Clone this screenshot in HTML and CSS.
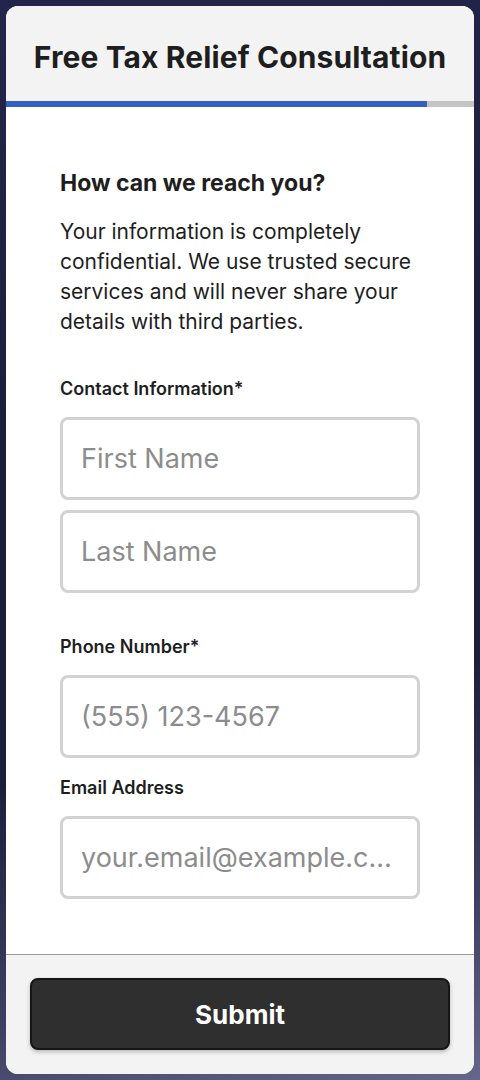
FILE: index.html
```html
<!DOCTYPE html>
<html lang="en">
<head>
  <meta charset="UTF-8" />
  <title>Free Tax Relief Consultation</title>
  <link rel="stylesheet" href="styles.css">
</head>
<body>

  <div class="card">
    <div class="card-header">
      <h1>Free Tax Relief Consultation</h1>
    </div>
    <div class="progress">
      <div class="progress-fill" style="width: 90%;"></div>
    </div>

    <form class="card-body">
      <h2>How can we reach you?</h2>
      <p class="intro">Your information is completely confidential. We use trusted secure services and will never share your details with third parties.</p>

      <div class="field">
        <label>Contact Information*</label>
        <input type="text" placeholder="First Name" />
        <input type="text" placeholder="Last Name" />
      </div>

      <div class="field field-tight">
        <label>Phone Number*</label>
        <input type="tel" placeholder="(555) 123-4567" />
      </div>

      <div class="field field-last">
        <label>Email Address</label>
        <input type="email" placeholder="your.email@example.com" />
      </div>
    </form>

    <div class="card-footer">
      <button class="submit-btn">Submit</button>
    </div>
  </div>

</body>
</html>
```

FILE: styles.css
```css
:root {
  --panel: #f3f3f3;
  --text: #1e1e1e;
  --accent: #335fc0;
  --border: #d2d2d2;
}

* {
  box-sizing: border-box;
}

body {
  margin: 0;
  padding: 6px;
  min-height: 1080px;
  font-family: Inter, 'Noto Sans', sans-serif;
  color: var(--text);
  background: linear-gradient(165deg, #23264a 0%, #1b1e3a 40%, #1c1f3c 65%, #3d4062 85%, #64678a 100%);
}

.card {
  background: #fff;
  border-radius: 12px;
  overflow: hidden;
  height: 1068px;
  display: flex;
  flex-direction: column;
}

.card-header {
  background: var(--panel);
  height: 95px;
  display: flex;
  align-items: center;
  justify-content: center;
  padding-top: 6px;
}

.card-header h1 {
  margin: 0;
  font-size: 30px;
  font-weight: 700;
  letter-spacing: 0.1px;
}

.progress {
  height: 6px;
  background: #c4c4c4;
}

.progress-fill {
  height: 100%;
  background: var(--accent);
}

.card-body {
  flex: 1;
  padding: 62px 54px 0 54px;
}

.card-body h2 {
  margin: 0 0 20px;
  font-size: 23px;
  font-weight: 700;
}

.intro {
  margin: 0 0 41px;
  font-size: 21px;
  line-height: 30px;
}

.field {
  display: flex;
  flex-direction: column;
  gap: 10px;
  margin-bottom: 43px;
}

.field label {
  font-size: 18px;
  font-weight: 600;
  margin-bottom: 8px;
}

.field input {
  height: 83px;
  border: 3px solid var(--border);
  border-radius: 8px;
  padding: 0 18px;
  font-family: inherit;
  font-size: 27px;
  color: var(--text);
  text-overflow: ellipsis;
}

.field input::placeholder {
  color: #8c8c8c;
}

.field-tight {
  margin-bottom: 19px;
}

.field-last {
  margin-bottom: 0;
}

.card-footer {
  margin-top: auto;
  background: var(--panel);
  border-top: 1px solid #999;
  padding: 23px 24px 24px;
}

.submit-btn {
  width: 100%;
  height: 72px;
  background: #2f2f2f;
  color: #fff;
  border: 2px solid #161616;
  border-radius: 8px;
  font-family: inherit;
  font-size: 26px;
  font-weight: 700;
  box-shadow: 0 2px 4px rgba(0,0,0,0.25);
  cursor: pointer;
}
```
